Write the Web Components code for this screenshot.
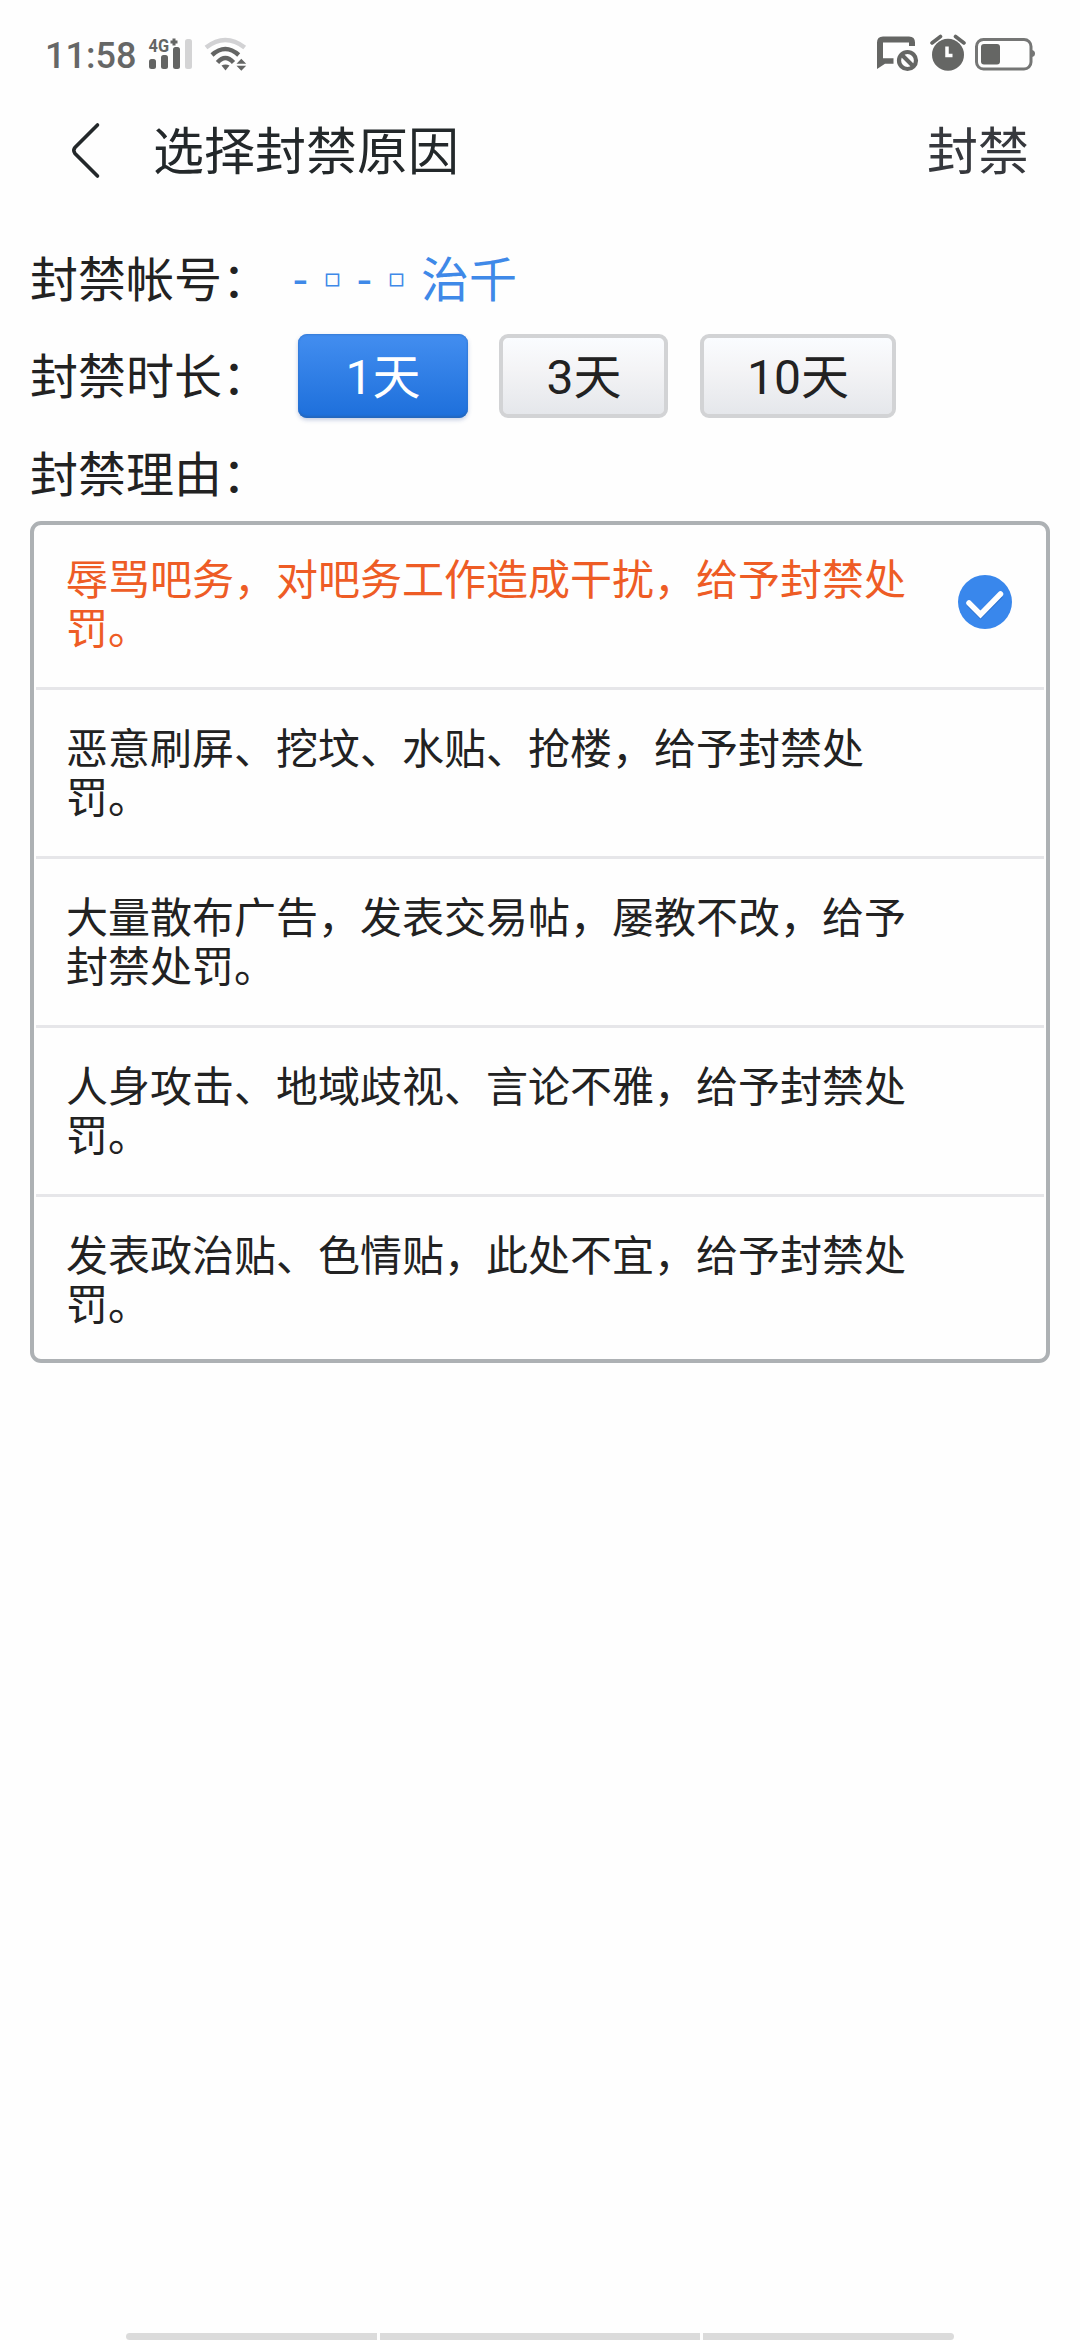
<!DOCTYPE html>
<html lang="zh-CN">
<head>
<meta charset="utf-8">
<title>选择封禁原因</title>
<style>
    html, body {
        margin: 0;
        background: #fefefe;
    }
    body {
        font-family: Roboto, "Noto Sans CJK SC", sans-serif;
        color: #222222;
    }
</style>
</head>
<body>
<ban-page>
    <status-bar slot="top" time="11:58"></status-bar>
    <title-bar slot="top" action="封禁">选择封禁原因</title-bar>
    <form-row label="封禁帐号："><user-name></user-name></form-row>
    <form-row label="封禁时长：">
        <day-button selected>1天</day-button>
        <day-button>3天</day-button>
        <day-button>10天</day-button>
    </form-row>
    <form-row label="封禁理由："></form-row>
    <reason-list>
        <reason-item selected>辱骂吧务，对吧务工作造成干扰，给予封禁处罚。</reason-item>
        <reason-item>恶意刷屏、挖坟、水贴、抢楼，给予封禁处罚。</reason-item>
        <reason-item>大量散布广告，发表交易帖，屡教不改，给予封禁处罚。</reason-item>
        <reason-item>人身攻击、地域歧视、言论不雅，给予封禁处罚。</reason-item>
        <reason-item>发表政治贴、色情贴，此处不宜，给予封禁处罚。</reason-item>
    </reason-list>
    <gesture-bar slot="bottom"></gesture-bar>
</ban-page>

<script>
class BanPage extends HTMLElement {
    connectedCallback() {
        this.attachShadow({ mode: 'open' });
        this.shadowRoot.innerHTML = `
            <style>
                :host {
                    display: flex;
                    flex-direction: column;
                    width: 1080px;
                    height: 2340px;
                    overflow: hidden;
                }
                main {
                    flex: 1;
                    padding: 30px 30px 0;
                }
            </style>
            <slot name="top"></slot>
            <main><slot></slot></main>
            <slot name="bottom"></slot>
        `;
    }
}

class StatusBar extends HTMLElement {
    connectedCallback() {
        const time = this.getAttribute('time') || '';
        this.attachShadow({ mode: 'open' });
        this.shadowRoot.innerHTML = `
            <style>
                :host {
                    display: flex;
                    justify-content: space-between;
                    height: 100px;
                    padding: 0 43px 0 45px;
                    color: #666766;
                }
                .group {
                    display: flex;
                    align-items: flex-start;
                }
                .time {
                    width: 102px;
                    margin-top: 35px;
                    font-size: 36px;
                    font-weight: 500;
                    line-height: 42px;
                }
                svg {
                    display: block;
                    margin-top: 34px;
                }
            </style>
            <div class="group">
                <span class="time">${time}</span>
                <svg width="54" height="40" viewBox="147 34 54 40" fill="#646564">
                    <text x="148.600" y="52" font-size="17.500" font-weight="700" textLength="20.500" lengthAdjust="spacingAndGlyphs">4G</text>
                    <path d="M174 38.500v7M170.500 42h7" stroke="#646564" stroke-width="3"/>
                    <rect x="149" y="59" width="7" height="10" rx="2.500"/>
                    <rect x="161" y="55" width="7" height="14" rx="2.500"/>
                    <rect x="173" y="47" width="7" height="22" rx="2.500"/>
                    <rect x="185" y="39" width="7" height="30" rx="2.500" fill="#d4d4d5"/>
                </svg>
                <svg width="50" height="40" viewBox="201 34 50 40" fill="none" stroke="#646564" stroke-width="4.500">
                    <path d="M206 47.500Q225.300 32.500 244.700 47.500" stroke="#d2d2d4"/>
                    <path d="M212 55Q225.300 43 238.700 55"/>
                    <path d="M217.500 62.500Q225.300 53.500 233.500 62.500"/>
                    <path d="M221.500 65.500q4-2 8 0l-4 5z" fill="#646564" stroke="none"/>
                    <path d="M236.500 63.800h9.700L241.300 58.800zM236.500 65.800h9.700L241.300 70.800z" fill="#646564" stroke="none"/>
                </svg>
            </div>
            <div class="group">
                <svg width="164" height="40" viewBox="873 34 164 40" fill="none" stroke="#656664">
                    <path d="M912 46V42.500Q912 39.500 909 39.500H883Q880 39.500 880 42.500V63" stroke-width="6"/>
                    <path d="M877 58V69L885 63.800H893.500V58.300H883V52z" fill="#656664" stroke="none"/>
                    <circle cx="907.500" cy="60.500" r="8.500" stroke-width="4.200"/>
                    <path d="M901.500 54.500L913.500 66.500" stroke-width="4"/>
                    <circle cx="948" cy="54.700" r="16" fill="#656664" stroke="none"/>
                    <path d="M947 46.500V55.500H952.500" stroke="#fff" stroke-width="3.500"/>
                    <path d="M932 43L940.500 36.500M955.500 36.500L964 43" stroke-width="3.600" stroke-linecap="round"/>
                    <rect x="976.500" y="39.500" width="54.500" height="29.500" rx="7" stroke="#757675" stroke-width="3"/>
                    <rect x="981" y="44" width="19" height="20.500" rx="3" fill="#656664" stroke="none"/>
                    <path d="M1032 50q3 .5 3 3.500t-3 3.500z" fill="#757675" stroke="none"/>
                </svg>
            </div>
        `;
    }
}

class TitleBar extends HTMLElement {
    connectedCallback() {
        const action = this.getAttribute('action') || '';
        this.attachShadow({ mode: 'open' });
        this.shadowRoot.innerHTML = `
            <style>
                :host {
                    display: flex;
                    align-items: center;
                    height: 102px;
                    padding: 0 51px 0 66px;
                    font-size: 51px;
                    line-height: 60px;
                    color: #23282a;
                }
                svg {
                    display: block;
                    margin-right: 47px;
                }
                .title {
                    flex: 1;
                }
                .title, .action {
                    padding-top: 3px;
                }
                .action {
                    color: #36383d;
                }
            </style>
            <svg width="40" height="60" viewBox="66 121 40 60" fill="none" stroke="#23282a" stroke-width="3.600" stroke-linecap="round">
                <path d="M97.500 125L75 147.500Q72.500 150.500 75 153.500L97.500 176"/>
            </svg>
            <span class="title"><slot></slot></span>
            <span class="action">${action}</span>
        `;
    }
}

class FormRow extends HTMLElement {
    connectedCallback() {
        const label = this.getAttribute('label') || '';
        this.attachShadow({ mode: 'open' });
        this.shadowRoot.innerHTML = `
            <style>
                :host {
                    display: flex;
                    align-items: center;
                    height: 97.500px;
                    font-size: 48px;
                    line-height: 56px;
                }
                .label {
                    width: 268px;
                }
                .content {
                    display: flex;
                    align-items: center;
                    gap: 31.500px;
                }
            </style>
            <span class="label">${label}</span>
            <div class="content"><slot></slot></div>
        `;
    }
}

class UserName extends HTMLElement {
    connectedCallback() {
        this.attachShadow({ mode: 'open' });
        this.shadowRoot.innerHTML = `
            <style>
                :host {
                    display: flex;
                    margin-left: -5px;
                    color: #3f89e8;
                }
                .dash, .box {
                    display: block;
                    text-align: center;
                }
                .dash {
                    width: 15px;
                }
                .box {
                    width: 49px;
                    font: 27px/50px "DejaVu Sans", sans-serif;
                }
            </style>
            <span class="dash">-</span><span class="box">▫</span><span class="dash">-</span><span class="box">▫</span><span>治千</span>
        `;
    }
}

class DayButton extends HTMLElement {
    connectedCallback() {
        this.attachShadow({ mode: 'open' });
        this.shadowRoot.innerHTML = `
            <style>
                :host {
                    display: block;
                    box-sizing: border-box;
                    height: 84px;
                    margin-bottom: 4px;
                    padding: 0 43px;
                    border: 4px solid #d2d3d5;
                    border-radius: 9px;
                    background: linear-gradient(#fafcff, #f4f4f6 40%, #e5e7eb) padding-box;
                    line-height: 79px;
                }
                :host([selected]) {
                    padding: 0 47.500px;
                    border-width: 0;
                    background: linear-gradient(#438ef0, #1d6fdb);
                    box-shadow: inset 0 1px 2px #357cd6, inset 0 -2px 2px #2467bd, 0 2px 4px rgba(60, 90, 160, .3);
                    line-height: 87px;
                    color: #fff;
                }
            </style>
            <slot></slot>
        `;
    }
}

class ReasonList extends HTMLElement {
    connectedCallback() {
        this.attachShadow({ mode: 'open' });
        this.shadowRoot.innerHTML = `
            <style>
                :host {
                    display: block;
                    box-sizing: border-box;
                    height: 842px;
                    margin-top: -3.500px;
                    padding: 0 2px;
                    border: 4px solid #adb1b4;
                    border-radius: 11px;
                }
            </style>
            <slot></slot>
        `;
    }
}

class ReasonItem extends HTMLElement {
    connectedCallback() {
        this.attachShadow({ mode: 'open' });
        this.shadowRoot.innerHTML = `
            <style>
                :host {
                    display: flex;
                    justify-content: space-between;
                    align-items: flex-start;
                    box-sizing: border-box;
                    height: 169px;
                    padding: 35px 32px 0 30px;
                    border-bottom: 3px solid #e6e6e9;
                    font-size: 42px;
                    line-height: 49px;
                }
                :host(:first-child) {
                    height: 165px;
                    padding-top: 31px;
                }
                :host(:last-child) {
                    border-bottom: 0;
                }
                :host([selected]) {
                    color: #ee5c25;
                }
                .text {
                    width: 855px;
                }
                svg {
                    display: none;
                    margin-top: 19px;
                }
                :host([selected]) svg {
                    display: block;
                }
            </style>
            <span class="text"><slot></slot></span>
            <svg width="54" height="54" viewBox="0 0 54 54">
                <circle cx="27" cy="27" r="27" fill="#3987ec"/>
                <path d="M11 28.500L22.500 40L42.500 20" fill="none" stroke="#2b70cd" stroke-width="6.500"/>
                <path d="M11 28L22.500 39.500L42.500 19" fill="none" stroke="#fff" stroke-width="5.500" stroke-linecap="round"/>
            </svg>
        `;
    }
}

class GestureBar extends HTMLElement {
    connectedCallback() {
        this.attachShadow({ mode: 'open' });
        this.shadowRoot.innerHTML = `
            <style>
                :host {
                    display: grid;
                    grid-template-columns: 251px 320px 251px;
                    gap: 3px;
                    justify-content: center;
                    height: 7px;
                }
                i {
                    background: #dbdbdb;
                }
                i:first-child, i:last-child {
                    border-radius: 4px 0 0 4px;
                }
                i:last-child {
                    border-radius: 0 4px 4px 0;
                }
                style + i {
                    border-radius: 4px 0 0 4px;
                }
            </style>
            <i></i><i></i><i></i>
        `;
    }
}

customElements.define('ban-page', BanPage);
customElements.define('status-bar', StatusBar);
customElements.define('title-bar', TitleBar);
customElements.define('form-row', FormRow);
customElements.define('user-name', UserName);
customElements.define('day-button', DayButton);
customElements.define('reason-list', ReasonList);
customElements.define('reason-item', ReasonItem);
customElements.define('gesture-bar', GestureBar);
</script>
</body>
</html>
